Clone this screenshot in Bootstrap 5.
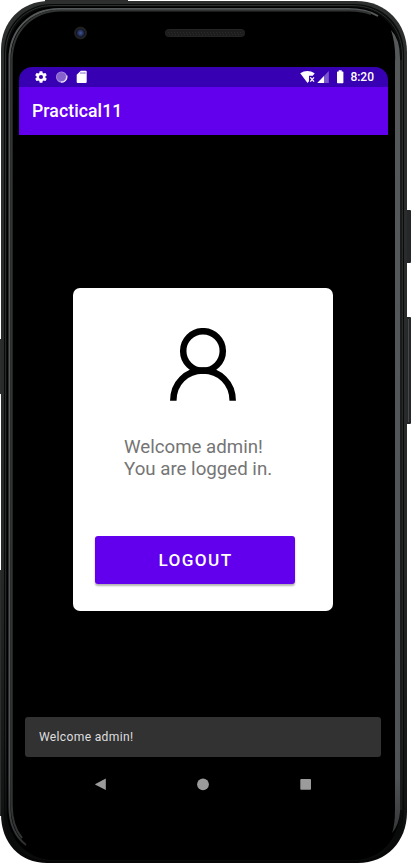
<!DOCTYPE html>
<html lang="en">
<head>
<meta charset="utf-8">
<meta name="viewport" content="width=device-width, initial-scale=1">
<title>Practical11</title>
<link href="https://cdn.jsdelivr.net/npm/bootstrap@5.3.0/dist/css/bootstrap.min.css" rel="stylesheet">
<style>
  body { font-family: Roboto, sans-serif; background: #fff; }
  .device { width: 411px; height: 863px; }
  .device-frame { z-index: 0; }
  .screen { z-index: 1; width: 369px; margin-left: 19px; padding-top: 67px; height: 806px; }
  .status-bar { height: 20px; flex: none; background: #3700b3; border-radius: 13px 13px 0 0; padding: 0 14px 0 15px; font-size: 12px; font-weight: 500; line-height: 20px; }
  .status-time { margin-left: 6px; }
  .app-bar { height: 48px; flex: none; background: #6200ee; padding: 2px 13px 0; }
  .app-title { font-size: 17.6px; font-weight: 500; line-height: 1; letter-spacing: .1px; }
  .login-card { width: 260px; height: 323px; margin: 153px 0 0 54px; border-radius: 7px; flex: none; }
  .avatar { margin: 40px 0 0 97px; }
  .welcome { margin: 35px 0 0 51px; font-size: 18.7px; line-height: 22px; color: #757575; white-space: nowrap; }
  .btn-logout { --bs-btn-bg: #6200ee; --bs-btn-color: #fff; width: 200px; height: 48px; margin: 56px 0 0 22px; border: 0; border-radius: 3px; padding: 2px 0 0 1px; font-size: 17.2px; font-weight: 500; letter-spacing: 1.4px; box-shadow: 0 2px 2px rgba(0,0,0,.3); }
  .snack { width: 356px; height: 40px; margin-left: 6px; margin-bottom: 18px; border-radius: 3px; background: #323232; color: #dedede; padding: 1px 14px 0; font-size: 12.1px; letter-spacing: .32px; }
  .nav-keys { height: 31px; flex: none; padding: 3px 76px 0; }
</style>
<script src="https://cdn.jsdelivr.net/npm/bootstrap@5.3.0/dist/js/bootstrap.bundle.min.js"></script>
</head>
<body class="overflow-hidden">
<div class="device position-relative overflow-hidden">
  <!-- Phone body, side keys, camera and earpiece -->
  <svg class="device-frame position-absolute top-0 start-0" width="411" height="863" viewBox="0 0 411 863" aria-hidden="true">
    <defs>
      <linearGradient id="edge" x1="0" y1="0" x2="0" y2="1"><stop offset="0" stop-color="#2c2f2e"/><stop offset=".65" stop-color="#262928"/><stop offset=".93" stop-color="#131414"/><stop offset="1" stop-color="#050505"/></linearGradient>
      <linearGradient id="shine" gradientUnits="userSpaceOnUse" x1="0" y1="0" x2="0" y2="863"><stop offset="0" stop-color="#55595a"/><stop offset=".9" stop-color="#505355"/><stop offset=".975" stop-color="#303233"/><stop offset="1" stop-color="#111"/></linearGradient>
      <linearGradient id="rim" gradientUnits="userSpaceOnUse" x1="0" y1="0" x2="0" y2="863"><stop offset="0" stop-color="#2c2f2f"/><stop offset=".85" stop-color="#222424"/><stop offset=".95" stop-color="#0c0c0c"/></linearGradient>
      <radialGradient id="lens"><stop offset="0" stop-color="#40569c"/><stop offset=".45" stop-color="#222b50"/><stop offset=".65" stop-color="#10131d"/><stop offset=".75" stop-color="#252525"/><stop offset="1" stop-color="#191919"/></radialGradient>
    </defs>
    <path fill="#2b2e2d" d="M0 339h3v55H0zM0 570h3v246H0z"/>
    <path fill="#252828" d="M405 210h5q1 0 1 1v51q0 1-1 1h-5zM405 317h5q1 0 1 1v105q0 1-1 1h-5z"/>
    <path fill="none" stroke="#47494a" d="M408.500 319v103"/>
    <path fill="#2b2e2d" d="M45 0h83v3H45z"/>
    <path fill="url(#edge)" d="M49 1H356C387 1 407 24 407 52V812C407 842 386 863 358 863H47C20 863 1 843 1 814V50C1 22 21 1 49 1Z"/>
    <path fill="#090a0a" d="M52 4H353C384 4 404 26 404 54V811C404 840 384 861 357 861H49C22 861 4 840 4 813V52C4 25 25 4 52 4Z"/>
    <path fill="none" stroke="url(#rim)" d="M5.500 812V54C5.500 26 26 5.500 53 5.500H352C382 5.500 402.500 27 402.500 56V810"/>
    <path fill="#000" d="M54 7H351C381 7 400 28 400 57V809C400 838 381 860 354 860H53C27 860 7 838 7 811V55C7 29 27 7 54 7Z"/>
    <path fill="none" stroke="url(#shine)" stroke-width="2" d="M26 845Q9.500 832 9.500 807V59C9.500 30 30 9 59 9H348Q366 9 378 16"/>
    <path fill="none" stroke="#323434" stroke-width="2" d="M22 838Q11.700 826 11.700 805V61C11.700 31 32 10.800 61 10.600H349Q363 11 371 14"/>
    <path fill="url(#shine)" d="M391 30Q400 39 400 58V812Q399 825 392 833Q395 825 395 809V62Q396 45 391 30Z"/>
    <path fill="none" stroke="#202222" stroke-width="1.500" d="M401 60V810"/>
    <circle cx="80.500" cy="33" r="6.500" fill="url(#lens)"/>
    <rect x="165.500" y="29.500" width="79" height="7" rx="3" fill="#1d1d1d" stroke="#242424"/>
    <path stroke="#2a2a2a" stroke-dasharray="1 2" d="M168 32.500h74M169 34.500h73"/>
  </svg>

  <main class="screen position-relative d-flex flex-column">
    <div class="status-bar d-flex align-items-center text-white">
      <svg width="14" height="14" viewBox="0 0 24 24" fill="#fff" aria-label="Settings"><path d="M19.430 12.980a7.800 7.800 0 0 0 0-1.960l2.110-1.650a.5.5 0 0 0 .12-.64l-2-3.460a.5.5 0 0 0-.61-.22l-2.490 1a7.300 7.300 0 0 0-1.690-.98l-.38-2.650A.5.5 0 0 0 14 2h-4a.5.5 0 0 0-.49.42l-.38 2.650a7.700 7.700 0 0 0-1.690.98l-2.490-1a.5.5 0 0 0-.61.22l-2 3.460a.5.5 0 0 0 .12.64l2.110 1.650a7.900 7.900 0 0 0 0 1.960l-2.110 1.650a.5.500 0 0 0-.12.640l2 3.460c.12.220.390.300.610.220l2.490-1c.520.400 1.080.730 1.690.980l.380 2.650A.5.5 0 0 0 10 22h4a.5.5 0 0 0 .49-.42l.38-2.650a7.700 7.700 0 0 0 1.690-.98l2.490 1a.5.500 0 0 0 .61-.22l2-3.460a.5.5 0 0 0-.12-.64zM12 15.500a3.500 3.500 0 1 1 0-7 3.500 3.500 0 0 1 0 7z"/></svg>
      <svg class="ms-2" width="12" height="14" viewBox="0.700 0 12 14" aria-hidden="true"><circle cx="6.200" cy="7" r="5.500" fill="#a98fde"/><circle cx="6" cy="6.800" r="4.500" fill="#8662cf"/><path d="M11.400 5.500A5.200 5.200 0 0 1 5.500 12" fill="none" stroke="#eee8fa" stroke-width="1.200"/></svg>
      <svg class="ms-2" width="11" height="14" viewBox="-.5 0 11 14" aria-label="SD card"><path fill="#fff" d="M4.300.7H9.200a1 1 0 0 1 1 1V12a1 1 0 0 1-1 1H1.200a1 1 0 0 1-1-1V4.800z"/><path stroke="#3700b3" stroke-width=".9" opacity=".75" d="M4.500 2.200v1.700M6.500 2.200v1.700M8.400 2.200v1.700"/></svg>
      <div class="d-flex align-items-center ms-auto">
        <svg width="44" height="14" viewBox="0 0 44 14" aria-label="Wi-Fi, signal and battery">
          <path fill="#fff" d="M.2 3.300Q7.200-1.400 14.700 3.300L12.800 5.800H9V11.200L7.500 12.900Z"/>
          <path stroke="#fff" stroke-width="1.300" d="M10.300 7.300l3.700 4.300M14 7.300l-3.700 4.300"/>
          <path fill="#7b59cd" d="M28.800 1v12H17.300z"/><path fill="#fff" d="M24 6v7h-6.700z"/>
          <path fill="#fff" d="M38.700.2h3v1.300h1q.7 0 .7.700v10.200q0 .8-.7.800h-5q-.7 0-.7-.8V2.200q0-.7.7-.7h1z"/>
        </svg>
        <span class="status-time">8:20</span>
      </div>
    </div>
    <header class="app-bar d-flex align-items-center text-white"><h1 class="app-title m-0">Practical11</h1></header>

    <section class="login-card bg-white d-flex flex-column align-items-start">
      <svg class="avatar" width="66" height="73" viewBox="0 0 66 73" fill="none" stroke="#000" stroke-width="6.500" aria-hidden="true"><circle cx="33" cy="23" r="19.800"/><path d="M3.300 72.800C3.300 55 16.500 42.500 33 42.500S62.700 55 62.700 72.800"/></svg>
      <p class="welcome mb-0">Welcome admin!<br>You are logged in.</p>
      <button type="button" class="btn btn-logout">LOGOUT</button>
    </section>

    <div class="snack mt-auto d-flex align-items-center" role="status">Welcome admin!</div>
    <nav class="nav-keys d-flex justify-content-between align-items-start">
      <svg width="12" height="13" viewBox="0 0 12 13" aria-label="Back"><path fill="#9b9b9b" d="M10.800.6V12L.4 6.800Q0 6.400.4 6z"/></svg>
      <svg width="13" height="13" viewBox="0 0 13 13" aria-label="Home"><circle cx="6" cy="6.300" r="5.900" fill="#9b9b9b"/></svg>
      <svg width="12" height="13" viewBox="0 0 12 13" aria-label="Overview"><rect x=".3" y="1" width="10.700" height="10.700" rx=".8" fill="#9b9b9b"/></svg>
    </nav>
  </main>
</div>
</body>
</html>
